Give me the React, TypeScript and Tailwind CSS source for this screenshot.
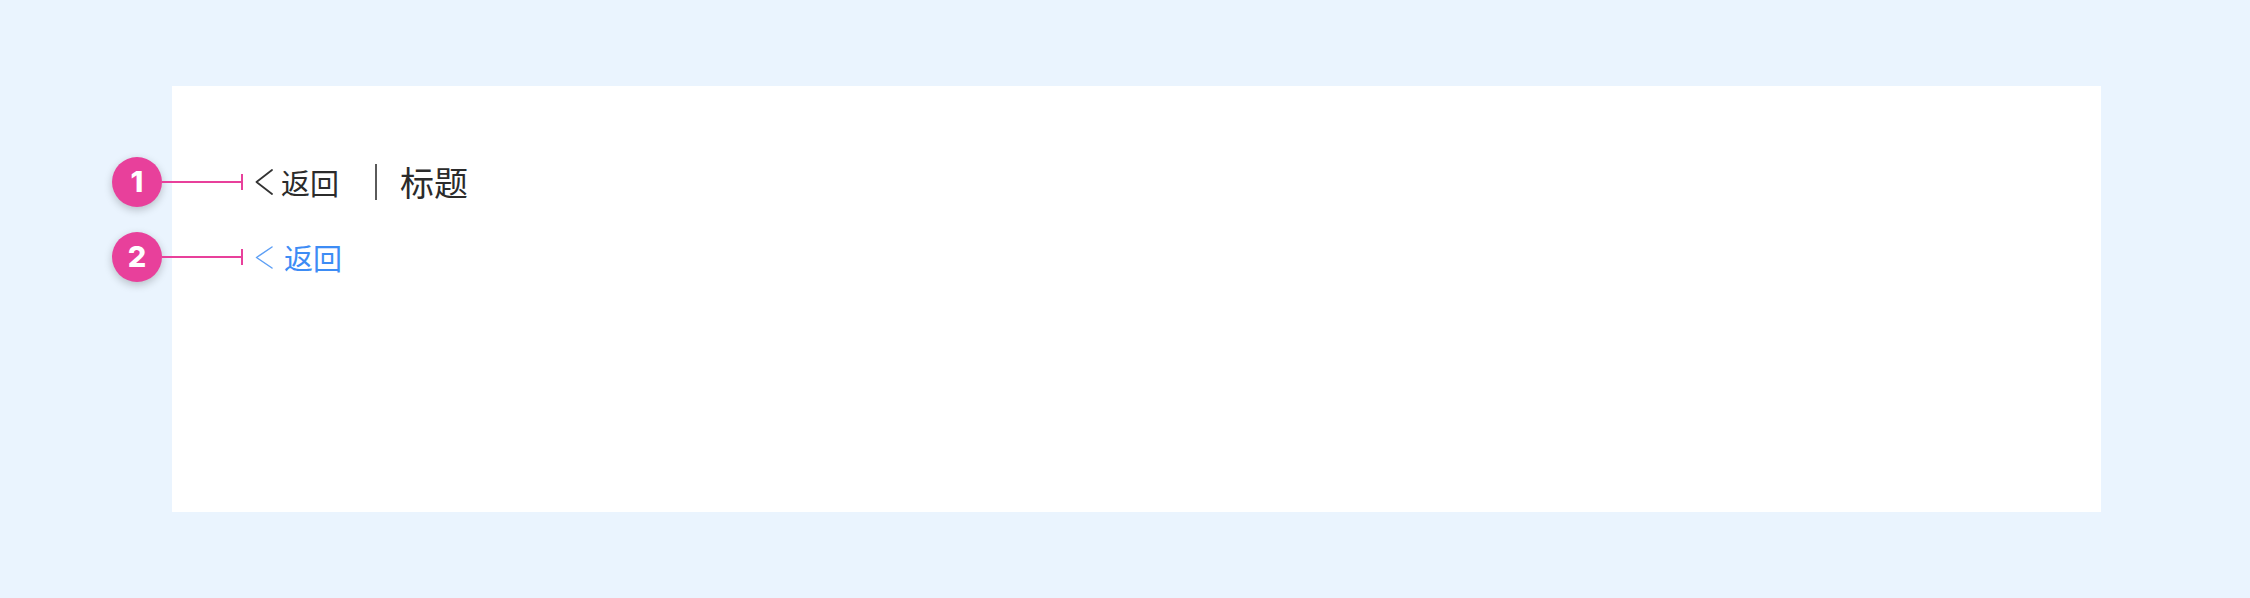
const font = "font-['Noto_Sans_CJK_SC','Noto_Sans',sans-serif]";

const Marker = ({ n }: { n: number }) => (
  <div className="absolute left-[-143px] top-1/2 -translate-y-1/2 flex items-center">
    <div className="w-[50px] h-[50px] rounded-full bg-[#e8409b] shadow-[0_3px_8px_rgba(0,0,0,0.22)] flex items-center justify-center text-white text-[29px] font-extrabold font-['Inter',sans-serif]">
      {n}
    </div>
    <div className="w-[79px] h-[2px] bg-[#e8409b]" />
    <div className="w-[2px] h-[16px] bg-[#e8409b]" />
  </div>
);

const Chevron = ({ color, w, h, stroke }: { color: string; w: number; h: number; stroke: number }) => (
  <svg width={w} height={h} viewBox={`0 0 ${w} ${h}`} fill="none">
    <polyline
      points={`${w - 1},1 1.5,${h / 2} ${w - 1},${h - 1}`}
      stroke={color}
      strokeWidth={stroke}
      strokeLinecap="round"
      strokeLinejoin="round"
    />
  </svg>
);

export default function App() {
  return (
    <div className={`w-[2250px] h-[598px] bg-[#eaf4fe] pt-[86px] pl-[172px] ${font}`}>
      <div className="w-[1929px] h-[426px] bg-white pt-[76px] pl-[83px] flex flex-col gap-[35px]">
        <div className="relative h-[40px] flex items-center">
          <Marker n={1} />
          <Chevron color="#333333" w={18} h={26} stroke={1.8} />
          <span className="ml-[8px] text-[29px] leading-none text-[#2b2b2b]">返回</span>
          <div className="ml-[36px] w-[2px] h-[36px] bg-[#5a5a5a]" />
          <span className="ml-[23px] text-[34px] leading-none text-[#2b2b2b]">标题</span>
        </div>
        <div className="relative h-[40px] flex items-center">
          <Marker n={2} />
          <Chevron color="#5d9ff5" w={18} h={23} stroke={1.5} />
          <span className="ml-[11px] text-[29px] leading-none text-[#3d8cf5]">返回</span>
        </div>
      </div>
    </div>
  );
}
